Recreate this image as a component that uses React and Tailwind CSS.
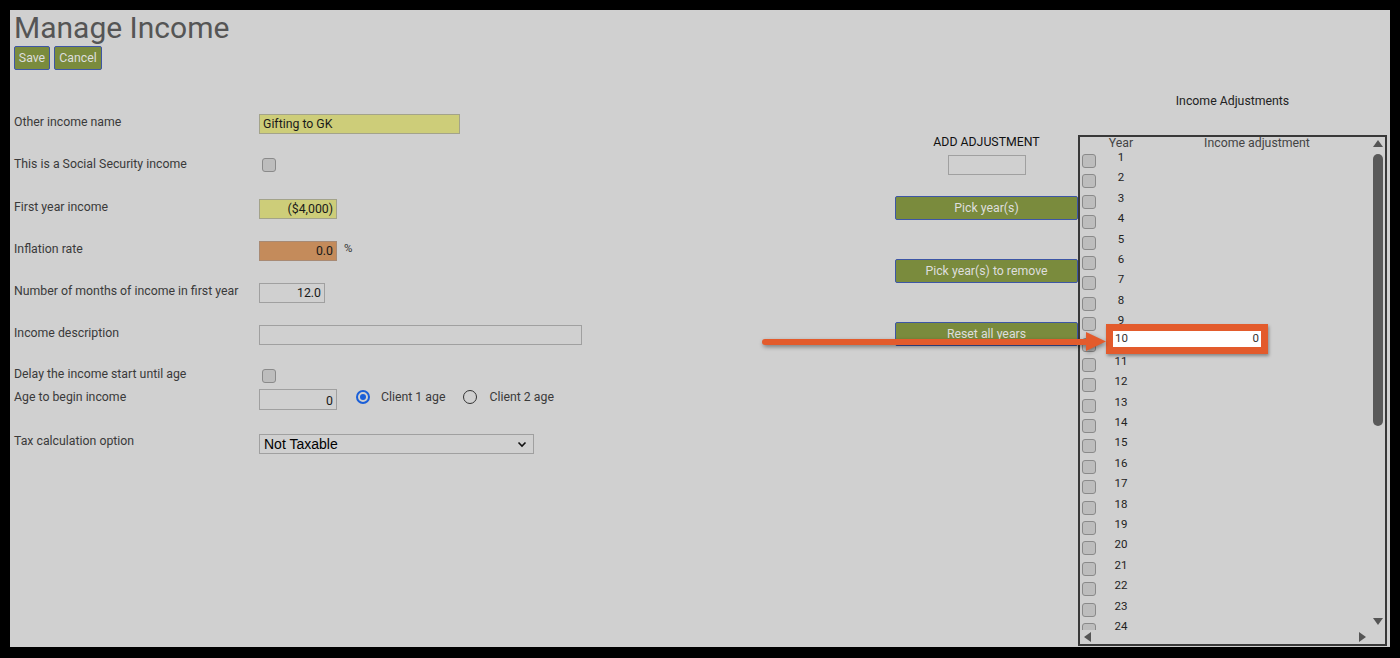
import React from "react";

const font = { fontFamily: "Roboto, 'Noto Sans', sans-serif" };

function Check({ className = "" }) {
  return (
    <div
      className={
        "w-[14px] h-[14px] rounded-[3px] bg-[#bdbdbd] border border-[#8a8a8a] " +
        className
      }
    />
  );
}

function GreenButton({ children, className = "" }) {
  return (
    <div
      className={
        "flex items-center justify-center bg-[#7a8b3d] border border-[#3d56a6] rounded-[2px] text-[12.3px] text-[#dedede] " +
        className
      }
    >
      {children}
    </div>
  );
}

function Row({ label, h, children }) {
  return (
    <div className={"flex items-start " + h}>
      <div className="w-[245px] pt-[1px] text-[12.3px] leading-[15px] text-[#3a3a3a]">{label}</div>
      <div className="flex items-start">{children}</div>
    </div>
  );
}

function Tri({ dir }) {
  const pts = {
    up: "0,7 5,0 10,7",
    down: "0,0 10,0 5,7",
    left: "7,0 7,10 0,5",
    right: "0,0 7,5 0,10",
  }[dir];
  const w = dir === "up" || dir === "down" ? 10 : 7;
  const h = dir === "up" || dir === "down" ? 7 : 10;
  return (
    <svg width={w} height={h} viewBox={`0 0 ${w} ${h}`}>
      <polygon points={pts} fill="#555555" />
    </svg>
  );
}

export default function App() {
  const years = Array.from({ length: 24 }, (_, i) => i + 1);
  return (
    <div className="w-[1400px] h-[658px] bg-black pt-[10px] px-[10px] pb-[11px]" style={font}>
      <div className="relative h-full bg-[#d0d0d0] flex">
        {/* Left column */}
        <div className="w-[885px] pl-[4px] flex flex-col">
          <h1 className="text-[30px] leading-[36px] text-[#555555] font-normal">Manage Income</h1>
          <div className="flex gap-[4px] h-[24px]">
            <GreenButton className="w-[36px] h-[24px]">Save</GreenButton>
            <GreenButton className="w-[48px] h-[24px]">Cancel</GreenButton>
          </div>
          <div className="mt-[44px] flex flex-col">
            <Row label="Other income name" h="h-[42px]">
              <div className="w-[201px] h-[20px] bg-[#cdcd79] border border-[#a3a38a] px-[3px] text-[12.3px] leading-[18px] text-[#1a1a1a]">
                Gifting to GK
              </div>
            </Row>
            <Row label="This is a Social Security income" h="h-[43px]">
              <Check className="mt-[2px] ml-[3px]" />
            </Row>
            <Row label="First year income" h="h-[42px]">
              <div className="w-[78px] h-[20px] bg-[#cdcd79] border border-[#a3a38a] px-[3px] text-[12.3px] leading-[19px] text-[#1a1a1a] text-right">
                ($4,000)
              </div>
            </Row>
            <Row label="Inflation rate" h="h-[42px]">
              <div className="w-[78px] h-[20px] bg-[#c48b5b] border border-[#a88a74] px-[3px] text-[12.3px] leading-[19px] text-[#1a1a1a] text-right">
                0.0
              </div>
              <span className="ml-[7px] text-[11.5px] leading-[14px] text-[#333]">%</span>
            </Row>
            <Row label="Number of months of income in first year" h="h-[42px]">
              <div className="w-[66px] h-[20px] bg-[#d0d0d0] border border-[#a0a0a0] px-[3px] text-[12.3px] leading-[19px] text-[#1a1a1a] text-right">
                12.0
              </div>
            </Row>
            <Row label="Income description" h="h-[41px]">
              <div className="w-[323px] h-[20px] bg-[#d0d0d0] border border-[#a0a0a0]" />
            </Row>
            <Row label="Delay the income start until age" h="h-[23px]">
              <Check className="mt-[3px] ml-[3px]" />
            </Row>
            <Row label="Age to begin income" h="h-[44px]">
              <div className="w-[78px] h-[21px] bg-[#d0d0d0] border border-[#a0a0a0] px-[3px] text-[12.3px] leading-[22px] text-[#1a1a1a] text-right">
                0
              </div>
              <div className="ml-[19px] mt-[1px] w-[14px] h-[14px] rounded-full border-2 border-[#1a5fd8] flex items-center justify-center">
                <div className="w-[6px] h-[6px] rounded-full bg-[#1a5fd8]" />
              </div>
              <span className="ml-[11px] text-[12.3px] leading-[16px] text-[#3a3a3a]">Client 1 age</span>
              <div className="ml-[18px] mt-[1px] w-[14px] h-[14px] rounded-full border border-[#333]" />
              <span className="ml-[12px] text-[12.3px] leading-[16px] text-[#3a3a3a]">Client 2 age</span>
            </Row>
            <Row label="Tax calculation option" h="h-[30px]">
              <div
                className="mt-[1px] w-[275px] h-[20px] bg-[#d0d0d0] border border-[#a0a0a0] pl-[4px] pr-[6px] flex items-center justify-between text-[14px] text-black"
                style={{ fontFamily: "'Liberation Sans', Arial, sans-serif" }}
              >
                <span>Not Taxable</span>
                <svg width="10" height="7" viewBox="0 0 10 7">
                  <polyline points="1.5,1.5 5,5 8.5,1.5" fill="none" stroke="#111" strokeWidth="1.6" />
                </svg>
              </div>
            </Row>
          </div>
        </div>

        {/* Middle column */}
        <div className="w-[183px] flex flex-col items-center pt-[125px]">
          <div className="text-[12.3px] leading-[14px] text-[#111]">ADD ADJUSTMENT</div>
          <div className="mt-[6px] w-[78px] h-[20px] bg-[#d0d0d0] border border-[#a0a0a0]" />
          <GreenButton className="mt-[21px] w-[183px] h-[24px]">Pick year(s)</GreenButton>
          <GreenButton className="mt-[39px] w-[183px] h-[24px]">Pick year(s) to remove</GreenButton>
          <GreenButton className="mt-[39px] w-[183px] h-[24px]">Reset all years</GreenButton>
        </div>

        {/* Right column */}
        <div className="w-[309px] flex flex-col pt-[83px] pb-[1px]">
          <div className="text-center text-[12.3px] leading-[16px] text-[#222]">Income Adjustments</div>
          <div className="mt-[26px] flex-1 flex flex-col border-2 border-[#383838] min-h-0">
            <div className="flex-1 flex min-h-0">
              <div className="flex-1 overflow-hidden">
                <div className="flex h-[13px] text-[12.3px] leading-[13px] text-[#444]">
                  <div className="w-[19px]" />
                  <div className="w-[44px] text-center">Year</div>
                  <div className="flex-1 text-center">Income adjustment</div>
                </div>
                {years.map((y) => (
                  <div key={y} className="relative flex h-[20.4px]">
                    <div className="w-[19px] pl-[2px] pt-[4px]">
                      <Check />
                    </div>
                    <div className="w-[44px] text-center text-[11.5px] leading-[14px] text-[#222]">{y}</div>
                    {y === 10 && (
                      <div className="absolute left-[26px] top-[-10px] w-[162px] h-[30px] border-[7px] border-[#e35b2c] bg-white shadow-[1px_2px_3px_rgba(0,0,0,0.35)] flex items-center justify-between px-[2px] text-[11.5px] text-[#333] z-10">
                        <span>10</span>
                        <span>0</span>
                      </div>
                    )}
                  </div>
                ))}
              </div>
              <div className="w-[14px] flex flex-col items-center pt-[3px] pb-[5px]">
                <Tri dir="up" />
                <div className="mt-[7px] w-[10px] h-[272px] rounded-full bg-[#595959]" />
                <div className="flex-1" />
                <Tri dir="down" />
              </div>
            </div>
            <div className="h-[14px] flex items-center justify-between pl-[4px] pr-[19px]">
              <Tri dir="left" />
              <Tri dir="right" />
            </div>
          </div>
        </div>

        {/* Annotation arrow */}
        <svg
          className="absolute left-[750px] top-[318px] z-20 drop-shadow-[1px_2px_2px_rgba(0,0,0,0.4)]"
          width="350"
          height="30"
          viewBox="0 0 350 30"
        >
          <line x1="5" y1="14" x2="330" y2="14" stroke="#e35b2c" strokeWidth="6" strokeLinecap="round" />
          <polygon points="326,4 346,13.5 326,23" fill="#e35b2c" />
        </svg>
      </div>
    </div>
  );
}
